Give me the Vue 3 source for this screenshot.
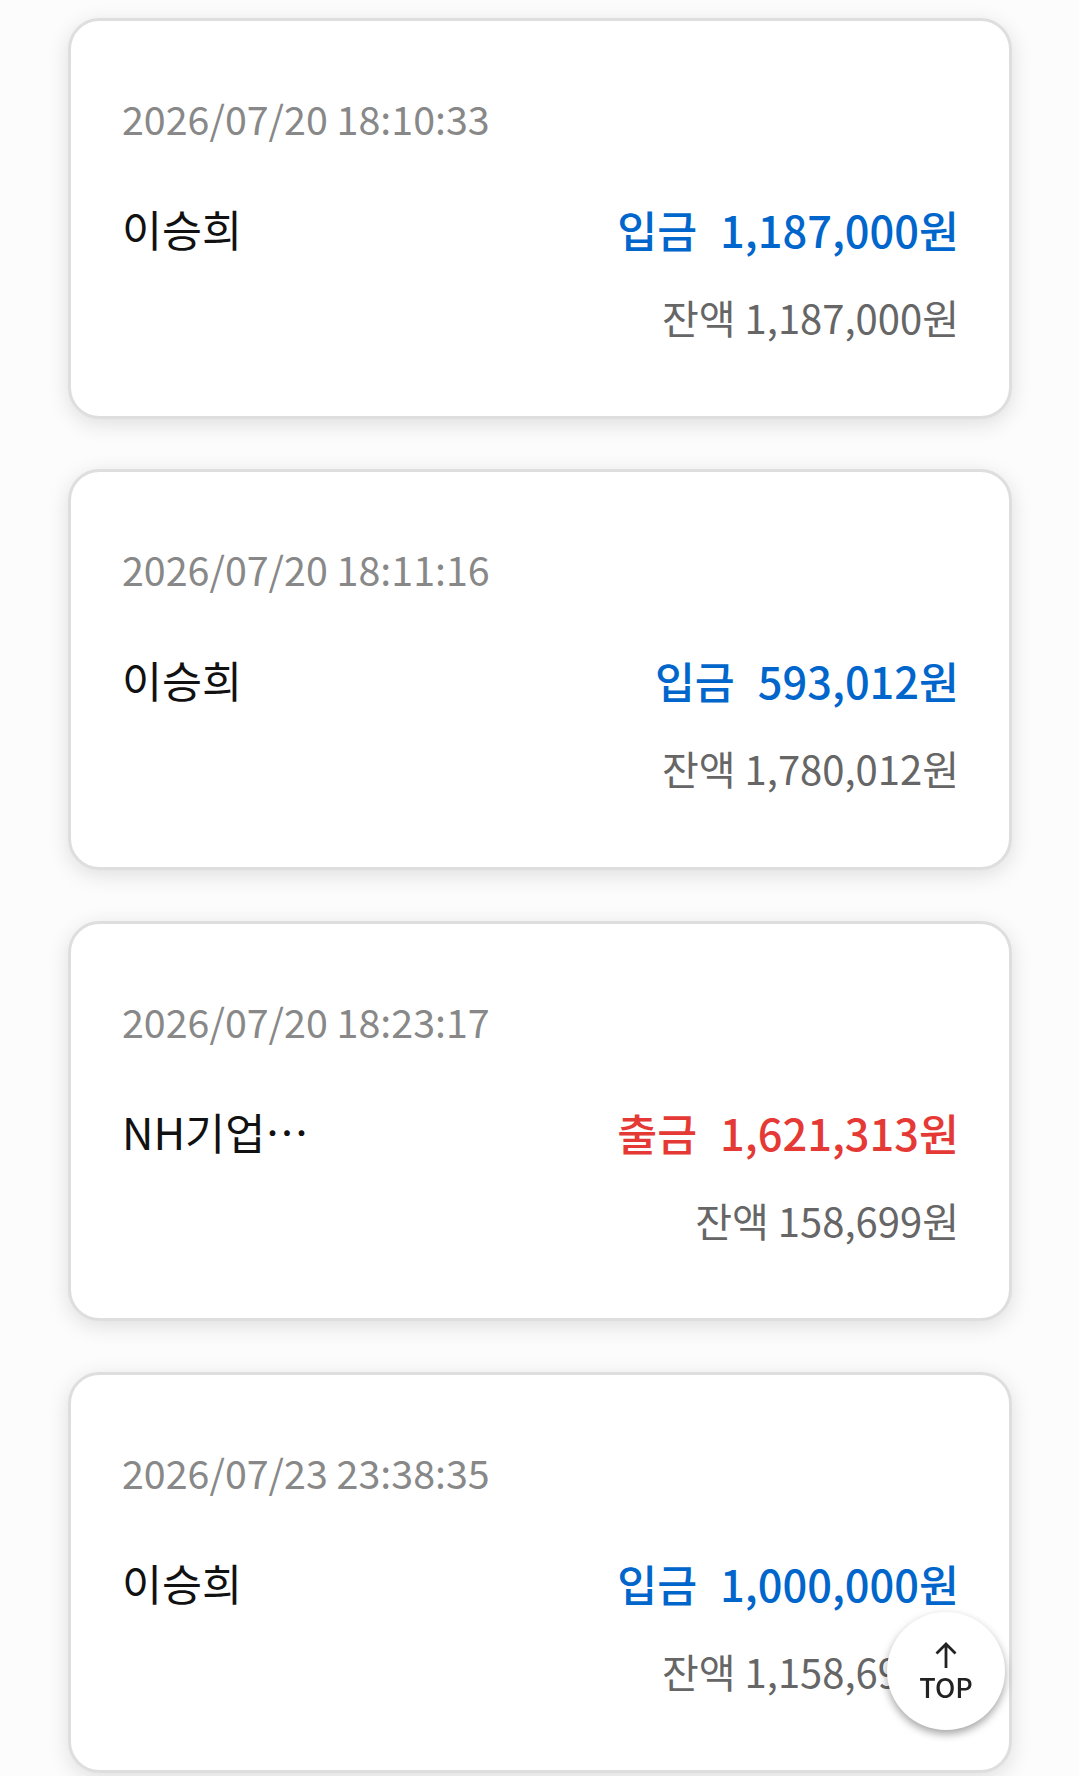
<script setup>
const rows = [
  { date: '2026/07/20 18:10:33', cls: 'a', name: '이승희', type: '입금', amount: '1,187,000원', balance: '1,187,000원' },
  { date: '2026/07/20 18:11:16', cls: 'b', name: '이승희', type: '입금', amount: '593,012원', balance: '1,780,012원' },
  { date: '2026/07/20 18:23:17', cls: 'c', name: 'NH기업은행', type: '출금', amount: '1,621,313원', balance: '158,699원' },
  { date: '2026/07/23 23:38:35', cls: 'd', name: '이승희', type: '입금', amount: '1,000,000원', balance: '1,158,699원' },
]

function scrollToTop() {
  window.scrollTo({ top: 0, behavior: 'smooth' })
}
</script>

<template>
  <div class="page">
    <div v-for="row in rows" :key="row.date" class="card">
      <div class="date" :class="row.cls">{{ row.date }}</div>
      <div class="main">
        <div class="name">{{ row.name }}</div>
        <div class="amount" :class="row.type === '입금' ? 'in' : 'out'">
          <span class="type">{{ row.type }}</span>{{ row.amount }}
        </div>
      </div>
      <div class="balance">잔액 {{ row.balance }}</div>
    </div>
    <button class="top-btn" @click="scrollToTop" aria-label="TOP">
      <svg width="24" height="28" viewBox="0 0 24 28" fill="none">
        <path d="M12 27V3M2.5 12.5L12 3l9.5 9.5" stroke="#222" stroke-width="2.8" />
      </svg>
      <span>TOP</span>
    </button>
  </div>
</template>

<style>
html,
body {
  margin: 0;
  background: #fcfcfc;
}
</style>

<style scoped>
.page {
  height: 1776px;
  overflow: hidden;
  box-sizing: border-box;
  padding: 18px 67px 0 68px;
  display: flex;
  flex-direction: column;
  gap: 50.6px;
  font-family: "Noto Sans CJK KR", sans-serif;
  position: relative;
}

.card {
  flex: none;
  box-sizing: border-box;
  height: 400.7px;
  padding: 68px 50px 0 51px;
  background: #fff;
  border: 3px solid #dedede;
  border-radius: 31.5px;
  box-shadow: 0 5px 21px rgba(0, 0, 0, 0.12);
}

.date {
  font-size: 39.4px;
  line-height: 58px;
  color: #888;
}

.a { font-feature-settings: "calt" 0, "kern" 0; font-kerning: none; }
.b { font-feature-settings: "ccmp" 0, "locl" 0, "liga" 0, "clig" 0; }
.c { text-rendering: optimizeSpeed; }
.d { font-family: "Noto Sans CJK JP", sans-serif; }

.main {
  display: flex;
  justify-content: space-between;
  margin-top: 51px;
}

.name {
  width: 190px;
  font-size: 43.5px;
  line-height: 62px;
  color: #111;
  white-space: nowrap;
  overflow: hidden;
  text-overflow: ellipsis;
}

.amount {
  font-size: 43.4px;
  line-height: 62px;
  font-weight: 500;
  white-space: nowrap;
}

.type {
  margin-right: 23px;
}

.in {
  color: #0066cc;
}

.out {
  color: #e53935;
}

.balance {
  margin-top: 28px;
  font-size: 40px;
  line-height: 58px;
  color: #666;
  text-align: right;
}

.top-btn {
  position: fixed;
  left: 887px;
  top: 1612px;
  width: 118px;
  height: 118px;
  padding: 0;
  border: none;
  border-radius: 50%;
  background: #fff;
  box-shadow: 0 4px 8px rgba(0, 0, 0, 0.36);
  display: flex;
  flex-direction: column;
  align-items: center;
  justify-content: center;
  font-family: "Noto Sans CJK KR", sans-serif;
  cursor: pointer;
}

.top-btn span {
  font-size: 27px;
  line-height: 30px;
  font-weight: 500;
  color: #222;
  margin-top: 3px;
}
</style>
